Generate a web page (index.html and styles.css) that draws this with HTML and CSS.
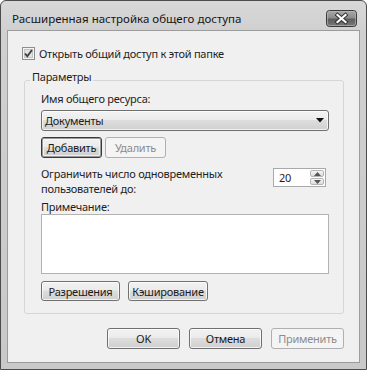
FILE: index.html
```html
<!DOCTYPE html>
<html lang="ru">
<head>
<meta charset="utf-8">
<title>Расширенная настройка общего доступа</title>
<link rel="stylesheet" href="styles.css">
</head>
<body>
<div class="window">
  <div class="titlebar">
    <span class="title">Расширенная настройка общего доступа</span>
    <span class="close">
      <svg width="31" height="17" viewBox="0 0 31 17">
        <defs>
          <linearGradient id="cg" x1="0" y1="0" x2="0" y2="1">
            <stop offset="0" stop-color="#a9a9a9"/>
            <stop offset="0.45" stop-color="#8c8c8c"/>
            <stop offset="0.55" stop-color="#5e5e5e"/>
            <stop offset="1" stop-color="#7a7a7a"/>
          </linearGradient>
        </defs>
        <rect x="0.5" y="0.5" width="30" height="16" rx="3" fill="url(#cg)" stroke="#3a3a3a"/>
        <rect x="1.5" y="1.5" width="28" height="14" rx="2" fill="none" stroke="#bdbdbd" stroke-opacity="0.6"/>
        <path d="M11.5 5 L19.5 12 M19.5 5 L11.5 12" stroke="#2c2c2c" stroke-width="4" stroke-linecap="square"/>
        <path d="M11.5 5 L19.5 12 M19.5 5 L11.5 12" stroke="#ffffff" stroke-width="2.2" stroke-linecap="square"/>
      </svg>
    </span>
  </div>
  <div class="client">
    <label class="check-row">
      <span class="checkbox">
        <svg width="13" height="13" viewBox="0 0 13 13">
          <rect x="0.5" y="0.5" width="12" height="12" fill="#f4f4f4" stroke="#8e8e8e"/>
          <rect x="2.5" y="2.5" width="8" height="8" fill="#e2e2e2" stroke="#c4c4c4"/>
          <path d="M3 6.5 L5.3 9.2 L10 3" fill="none" stroke="#3e3e3e" stroke-width="1.8"/>
        </svg>
      </span>
      <span class="text">Открыть общий доступ к этой папке</span>
    </label>

    <fieldset class="group">
      <legend class="legend">Параметры</legend>
      <div class="group-body">
        <div class="label">Имя общего ресурса:</div>
        <div class="combo">
          <span class="combo-text">Документы</span>
          <svg class="combo-arrow" width="8" height="5" viewBox="0 0 8 5"><path d="M0 0 H8 L4 4.5 Z" fill="#111"/></svg>
        </div>
        <div class="btn-row">
          <span class="btn btn-small btn-focus">Добавить</span>
          <span class="btn btn-small btn-disabled">Удалить</span>
        </div>
        <div class="limit-row">
          <div class="label limit-label">
            <span class="line">Ограничить число одновременных</span>
            <span class="line">пользователей до:</span>
          </div>
          <div class="spin">
            <span class="spin-value">20</span>
            <span class="spin-btns">
              <span class="spin-btn">
                <svg width="7" height="4" viewBox="0 0 7 4"><path d="M0 4 L3.5 0 L7 4 Z" fill="#555"/></svg>
              </span>
              <span class="spin-btn">
                <svg width="7" height="4" viewBox="0 0 7 4"><path d="M0 0 H7 L3.5 4 Z" fill="#555"/></svg>
              </span>
            </span>
          </div>
        </div>
        <div class="label note-label">Примечание:</div>
        <div class="note"></div>
        <div class="btn-row btn-row-wide">
          <span class="btn btn-perm">Разрешения</span>
          <span class="btn btn-cache">Кэширование</span>
        </div>
      </div>
    </fieldset>

    <div class="footer">
      <span class="btn btn-foot">OK</span>
      <span class="btn btn-foot">Отмена</span>
      <span class="btn btn-foot btn-disabled">Применить</span>
    </div>
  </div>
</div>
</body>
</html>
```
FILE: styles.css
```css
* { box-sizing: border-box; }
html, body {
  margin: 0;
  padding: 0;
  background: #ffffff;
}
body {
  font-family: "Noto Sans", "Open Sans", sans-serif;
  font-size: 11px;
  letter-spacing: -0.25px;
  color: #1e1e1e;
}
.window {
  width: 367px;
  height: 370px;
  border: 1px solid #4c4c4c;
  border-radius: 6px 6px 0 0;
  background: linear-gradient(to bottom, #d8d8d8 0px, #d0d0d0 30px, #c9c9c9 100%);
  padding: 0 6px 6px 6px;
  display: flex;
  flex-direction: column;
}
.titlebar {
  height: 29px;
  display: flex;
  align-items: flex-start;
  justify-content: space-between;
}
.title {
  margin-left: 5px;
  margin-top: 10px;
  line-height: 16px;
  font-size: 11.5px;
  letter-spacing: 0;
  color: #151515;
}
.close {
  display: block;
  width: 31px;
  height: 17px;
  margin-top: 9px;
  margin-right: 3px;
}
.close svg { display: block; }
.client {
  flex: 1;
  border: 1px solid #9c9c9c;
  background: #f0f0f0;
  display: flex;
  flex-direction: column;
}
.check-row {
  display: flex;
  align-items: center;
  height: 13px;
  margin: 16px 0 0 14px;
  gap: 4px;
}
.checkbox, .checkbox svg { display: block; width: 13px; height: 13px; }
.check-row .text { line-height: 13px; }

.group {
  margin: 10px 0 0 16px;
  width: 320px;
  padding: 0;
  border: 1px solid #d6d6d6;
  border-radius: 3px;
  min-width: 0;
}
.legend {
  margin-left: 5px;
  padding: 0 2px 6px 2px;
  line-height: 14px;
}
.group-body {
  padding: 2px 14px 12px 16px;
  display: flex;
  flex-direction: column;
}
.label { line-height: 13px; }
.limit-label {
  display: flex;
  flex-direction: column;
}
.limit-label .line {
  display: block;
  height: 15px;
  line-height: 15px;
}
.combo {
  margin-top: 5px;
  height: 21px;
  border: 1px solid #6f6f6f;
  border-radius: 3px;
  background: linear-gradient(to bottom, #f3f3f3 0%, #ebebeb 45%, #dddddd 50%, #d0d0d0 100%);
  display: flex;
  align-items: center;
  justify-content: space-between;
  padding: 0 4px 0 3px;
  box-shadow: inset 0 0 0 1px rgba(255,255,255,0.7);
}
.combo-text { line-height: 13px; }
.combo-arrow { display: block; }
.btn-row {
  display: flex;
  gap: 3px;
  margin-top: 6px;
}
.btn {
  display: flex;
  align-items: center;
  justify-content: center;
  height: 21px;
  border: 1px solid #707070;
  border-radius: 3px;
  background: linear-gradient(to bottom, #f2f2f2 0%, #ebebeb 45%, #dddddd 50%, #cfcfcf 100%);
  box-shadow: inset 0 0 0 1px rgba(255,255,255,0.75);
  line-height: 13px;
  color: #1a1a1a;
}
.btn-small { width: 61px; }
.btn-focus {
  border-color: #3a3a3a;
  box-shadow: inset 0 0 0 1px #9a9a9a, inset 0 0 0 2px rgba(255,255,255,0.6);
}
.btn-disabled {
  border-color: #b0b0b0;
  background: #f4f4f4;
  box-shadow: none;
  color: #8c8c8c;
}
.limit-row {
  margin-top: 8px;
  display: flex;
  justify-content: space-between;
  align-items: flex-start;
}
.spin {
  margin-top: 2px;
  margin-right: 3px;
  width: 53px;
  height: 19px;
  border: 1px solid #a9a9a9;
  background: #ffffff;
  display: flex;
  justify-content: space-between;
}
.spin-value {
  padding-left: 5px;
  line-height: 17px;
}
.spin-btns {
  width: 15px;
  display: flex;
  flex-direction: column;
  padding: 1px 1px 1px 0;
  gap: 1px;
}
.spin-btn {
  flex: 1;
  border: 1px solid #b5b5b5;
  border-radius: 2px;
  background: linear-gradient(to bottom, #f6f6f6, #dcdcdc);
  display: flex;
  align-items: center;
  justify-content: center;
}
.spin-btn svg { display: block; }
.note-label { margin-top: 4px; }
.note {
  margin-top: 1px;
  height: 60px;
  border: 1px solid #b3b3b3;
  background: #ffffff;
}
.btn-row-wide {
  margin-top: 7px;
  gap: 8px;
}
.btn-row-wide .btn { height: 20px; }
.btn-perm { width: 79px; }
.btn-cache { width: 80px; }
.footer {
  margin-top: 14px;
  padding-right: 15px;
  display: flex;
  justify-content: flex-end;
  gap: 9px;
}
.btn-foot { width: 73px; }
```
